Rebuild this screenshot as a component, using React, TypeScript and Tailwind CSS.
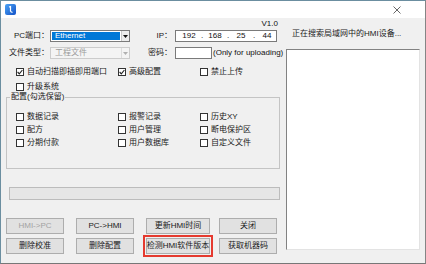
import React from 'react';

const font = "font-['Liberation_Sans','Noto_Sans_CJK_SC',sans-serif]";

function Check({ on, label, w }: { on?: boolean; label: string; w?: string }) {
  return (
    <div className={`flex items-center gap-[3px] h-[12px] ${w ?? ''}`}>
      <div className="w-[8px] h-[8px] border border-[#333] bg-white flex items-center justify-center">
        {on && (
          <svg width="6" height="6" viewBox="0 0 6 6">
            <path d="M0.6 3 L2.3 4.8 L5.4 1" fill="none" stroke="#222" strokeWidth="1.1" />
          </svg>
        )}
      </div>
      <span className="text-[8px] leading-none text-[#1a1a1a] whitespace-nowrap">{label}</span>
    </div>
  );
}

function Combo({ text, disabled }: { text: string; disabled?: boolean }) {
  return (
    <div
      className={`w-[80px] h-[12px] border flex ${
        disabled ? 'border-[#cccccc] bg-[#f4f4f4]' : 'border-[#7a7a7a] bg-white'
      }`}
    >
      <div className="flex-1 p-[1px]">
        <div
          className={`h-full flex items-center pl-[3px] text-[8px] leading-none ${
            disabled ? 'text-[#9a9a9a]' : 'bg-[#0078d7] text-white'
          }`}
        >
          {text}
        </div>
      </div>
      <div
        className={`w-[8px] border-l flex items-center justify-center ${
          disabled ? 'border-[#dddddd] bg-[#f4f4f4]' : 'border-[#c8c8c8] bg-[#ececec]'
        }`}
      >
        <svg width="5" height="3" viewBox="0 0 5 3">
          <path d="M0 0 H5 L2.5 3 Z" fill={disabled ? '#b0b0b0' : '#111'} />
        </svg>
      </div>
    </div>
  );
}

function Btn({ label, w, disabled, mark }: { label: string; w: string; disabled?: boolean; mark?: boolean }) {
  return (
    <div
      className={`${w} h-[16px] bg-[#e1e1e1] border border-[#adadad] flex items-center justify-center text-[8px] leading-none whitespace-nowrap ${
        disabled ? 'text-[#a3a3a3]' : 'text-[#1a1a1a]'
      } ${mark ? 'outline-2 outline-offset-1 outline-[#e53a2f]' : ''}`}
    >
      {label}
    </div>
  );
}

export default function App() {
  return (
    <div
      className={`w-[426px] h-[264px] border border-[#6b8ea0] border-r-[#858585] border-b-[#777] bg-[#f0f0f0] flex flex-col overflow-hidden ${font}`}
    >
      {/* Title bar */}
      <div className="h-[17px] bg-white flex items-center justify-between pl-[4px] pr-[24px] shrink-0">
        <svg width="11" height="11" viewBox="0 0 11 11">
          <defs>
            <linearGradient id="ig" x1="0" y1="0" x2="1" y2="1">
              <stop offset="0" stopColor="#4aa3f5" />
              <stop offset="1" stopColor="#1453c8" />
            </linearGradient>
          </defs>
          <rect x="0" y="0" width="11" height="11" rx="2" fill="url(#ig)" />
          <path d="M4 3 L5.5 2.5 V7.5 M5.5 7.5 L7.5 8.5" fill="none" stroke="#fff" strokeWidth="1.2" />
        </svg>
        <svg width="8" height="8" viewBox="0 0 8 8">
          <path d="M0.5 0.5 L7.5 7.5 M7.5 0.5 L0.5 7.5" stroke="#555" strokeWidth="0.9" />
        </svg>
      </div>

      <div className="flex flex-1">
        {/* Left side */}
        <div className="w-[284px] flex flex-col">
          <div className="h-[10px] mt-[1px] flex items-center justify-end pr-[7px] text-[8px] leading-none text-[#111]">
            V1.0
          </div>

          {/* PC port / IP */}
          <div className="flex items-center h-[12px] mt-[1px]">
            <div className="w-[48px] text-right text-[8px] leading-none text-[#1a1a1a] whitespace-nowrap">PC端口：</div>
            <div className="ml-[1px]">
              <Combo text="Ethernet" />
            </div>
            <div className="w-[44px] text-right pr-[2px] text-[8px] leading-none text-[#1a1a1a]">IP：</div>
            <div className="ml-[1px] w-[102px] h-[12px] border border-[#7a7a7a] bg-white flex items-center text-[8px] leading-none text-[#111] pl-[4px]">
              <span className="w-[18px] text-center">192</span>
              <span className="w-[8px] text-center">.</span>
              <span className="w-[18px] text-center">168</span>
              <span className="w-[8px] text-center">.</span>
              <span className="w-[18px] text-center">25</span>
              <span className="w-[8px] text-center">.</span>
              <span className="w-[18px] text-center">44</span>
            </div>
          </div>

          {/* File type / password */}
          <div className="flex items-center h-[12px] mt-[5px]">
            <div className="w-[48px] text-right text-[8px] leading-none text-[#1a1a1a] whitespace-nowrap">文件类型：</div>
            <div className="ml-[1px]">
              <Combo text="工程文件" disabled />
            </div>
            <div className="w-[44px] text-right pr-[2px] text-[8px] leading-none text-[#1a1a1a]">密码：</div>
            <div className="ml-[1px] w-[37px] h-[12px] border border-[#7a7a7a] bg-white" />
            <span className="ml-[1px] text-[8px] leading-none text-[#111] whitespace-nowrap">(Only for uploading)</span>
          </div>

          {/* options */}
          <div className="flex items-center mt-[7px] pl-[15px]">
            <Check on label="自动扫描即插即用端口" w="w-[102px]" />
            <Check on label="高级配置" w="w-[82px]" />
            <Check label="禁止上传" />
          </div>
          <div className="flex items-center mt-[3px] pl-[15px]">
            <Check label="升级系统" />
          </div>

          {/* Config group */}
          <div className="relative ml-[5px] w-[274px] h-[72px] mt-[4px] border border-[#c4c4c4]">
            <div className="absolute -top-[5px] left-[3px] px-[1px] bg-[#f0f0f0] text-[8px] leading-none text-[#1a1a1a] whitespace-nowrap">
              配置(勾选保留)
            </div>
            <div className="flex flex-col gap-[1px] pl-[9px] pt-[13px]">
              <div className="flex">
                <Check label="数据记录" w="w-[102px]" />
                <Check label="报警记录" w="w-[82px]" />
                <Check label="历史XY" />
              </div>
              <div className="flex">
                <Check label="配方" w="w-[102px]" />
                <Check label="用户管理" w="w-[82px]" />
                <Check label="断电保护区" />
              </div>
              <div className="flex">
                <Check label="分期付款" w="w-[102px]" />
                <Check label="用户数据库" w="w-[82px]" />
                <Check label="自定义文件" />
              </div>
            </div>
          </div>

          {/* Progress */}
          <div className="ml-[8px] w-[271px] h-[13px] mt-[18px] border border-[#bcbcbc] bg-[#e6e6e6]" />

          {/* Buttons */}
          <div className="flex ml-[5px] mt-[18px]">
            <Btn label="HMI->PC" w="w-[58px]" disabled />
            <div className="w-[12px]" />
            <Btn label="PC->HMI" w="w-[58px]" />
            <div className="w-[12px]" />
            <Btn label="更新HMI时间" w="w-[64px]" />
            <div className="w-[9px]" />
            <Btn label="关闭" w="w-[58px]" />
          </div>
          <div className="flex ml-[5px] mt-[4px]">
            <Btn label="删除校准" w="w-[58px]" />
            <div className="w-[12px]" />
            <Btn label="删除配置" w="w-[58px]" />
            <div className="w-[12px]" />
            <Btn label="检测HMI软件版本" w="w-[64px]" mark />
            <div className="w-[9px]" />
            <Btn label="获取机器码" w="w-[58px]" />
          </div>
        </div>

        {/* Right side */}
        <div className="flex-1 flex flex-col">
          <div className="h-[10px] mt-[11px] pl-[7px] flex items-center text-[8px] leading-none text-[#1a1a1a] whitespace-nowrap">
            正在搜索局域网中的HMI设备...
          </div>
          <div className="ml-[1px] mt-[10px] w-[134px] h-[201px] bg-white border border-[#828282] border-r-[#e3e3e3] border-b-[#e3e3e3]" />
        </div>
      </div>
    </div>
  );
}
